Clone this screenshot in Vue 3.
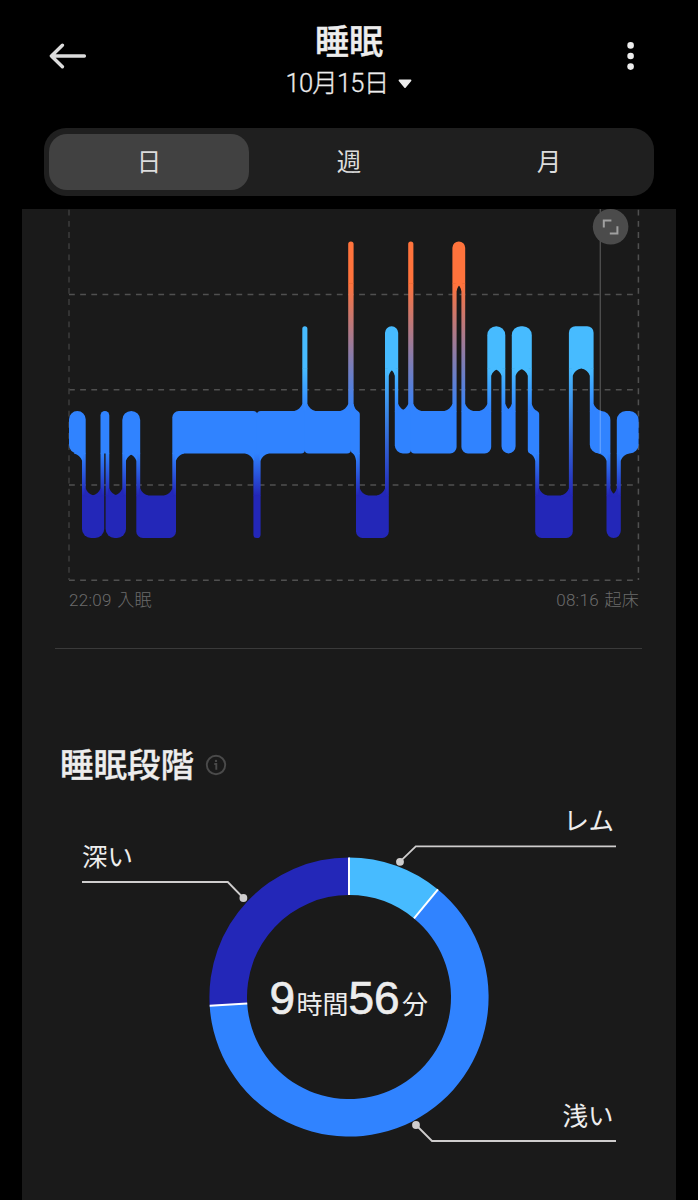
<template>
  <div class="sleep">
    <header class="sleep__header">
      <button type="button" class="icon-btn" aria-label="戻る">
        <svg width="38" height="28" viewBox="0 0 38 28" fill="none">
          <path d="M35.4 14H2.4M13.4 3.2L2.4 14L13.4 24.8" stroke="#dcdcdc" stroke-width="3.4" stroke-linecap="round" stroke-linejoin="round" />
        </svg>
      </button>
      <div class="sleep__heading">
        <h1 class="sleep__title">睡眠</h1>
        <div class="sleep__date">
          <span>10月15日</span>
          <svg width="14" height="10" viewBox="0 0 14 10">
            <path d="M1.4 1.4H12.6L7 8.2Z" fill="#ededed" stroke="#ededed" stroke-width="1.6" stroke-linejoin="round" />
          </svg>
        </div>
      </div>
      <button type="button" class="icon-btn icon-btn--menu" aria-label="メニュー">
        <svg width="8" height="30" viewBox="0 0 8 30" fill="#ededed">
          <circle v-for="cy in [4.4, 15, 25.6]" :key="cy" cx="4.6" :cy="cy" r="3.3" />
        </svg>
      </button>
    </header>

    <nav class="tabs">
      <button
        v-for="tab in tabs"
        :key="tab"
        type="button"
        class="tabs__item"
        :class="{ 'tabs__item--active': tab === activeTab }"
        @click="activeTab = tab"
      >
        {{ tab }}
      </button>
    </nav>

    <main class="card">
      <section class="timeline">
        <svg class="timeline__chart" width="654" height="380" viewBox="22 209 654 380">
          <defs>
            <linearGradient
              v-for="link in links"
              :id="`link-${link.id}`"
              :key="link.id"
              gradientUnits="userSpaceOnUse"
              x1="0"
              x2="0"
              :y1="link.y"
              :y2="link.y + link.h"
            >
              <stop offset="0" :stop-color="link.from" />
              <stop offset="1" :stop-color="link.to" />
            </linearGradient>
          </defs>

          <g class="grid">
            <line v-for="y in [294.4, 389.7, 485, 580.2]" :key="y" x1="69" x2="638" :y1="y" :y2="y" />
            <line class="grid__start" x1="69" x2="69" y1="209.8" y2="580" />
            <line x1="638.4" x2="638.4" y1="209.8" y2="580" />
          </g>

          <rect
            v-for="link in links"
            :key="link.id"
            :x="link.x"
            :y="link.y - 0.5"
            :width="link.w"
            :height="link.h + 1"
            :fill="`url(#link-${link.id})`"
          />
          <g v-for="(block, i) in blocks" :key="i" :fill="block.color">
            <path :d="block.body" />
            <path v-for="(d, n) in block.flares" :key="n" :d="d" />
          </g>

          <line x1="600.3" x2="600.3" y1="209" y2="453" stroke="#fff" stroke-opacity="0.22" stroke-width="1.4" />
          <circle cx="610.6" cy="226.8" r="17.8" fill="#4b4b4b" />
          <path d="M603.8 227.4V220.4H611.4M617.4 226.2V233.4H609.8" fill="none" stroke="#a0a0a0" stroke-width="2" />
        </svg>
        <div class="timeline__range">
          <span>22:09 入眠</span>
          <span>08:16 起床</span>
        </div>
      </section>

      <section class="stages">
        <h2 class="stages__title">
          <span>睡眠段階</span>
          <svg width="22" height="22" viewBox="0 0 22 22" fill="none" stroke="#4a4a4a">
            <circle cx="11" cy="11" r="9.2" stroke-width="1.9" />
            <path d="M9.3 10H11.3V15.8" stroke-width="1.9" />
            <circle cx="11" cy="6.9" r="1.2" fill="#4a4a4a" stroke="none" />
          </svg>
        </h2>
        <svg class="stages__chart" width="654" height="400" viewBox="22 790 654 400">
          <path v-for="slice in slices" :key="slice.name" :d="slice.d" :fill="slice.color" />
          <line
            v-for="slice in slices"
            :key="`sep-${slice.name}`"
            :x1="slice.sep[0]"
            :y1="slice.sep[1]"
            :x2="slice.sep[2]"
            :y2="slice.sep[3]"
            stroke="#fff"
            stroke-width="2"
          />
          <g v-for="slice in slices" :key="`label-${slice.name}`">
            <polyline :points="slice.line" fill="none" stroke="#cfcdcd" stroke-width="1.8" />
            <circle :cx="slice.dot[0]" :cy="slice.dot[1]" r="3.9" fill="#cfcdcd" />
            <text class="stages__label" :x="slice.text[0]" :y="slice.text[1]">{{ slice.name }}</text>
          </g>
          <text class="total" y="1013.5">
            <tspan class="total__num" x="269.5">9</tspan>
            <tspan class="total__unit" x="296.5">時間</tspan>
            <tspan class="total__num" x="348.5">56</tspan>
            <tspan class="total__unit" x="402">分</tspan>
          </text>
        </svg>
      </section>
    </main>
  </div>
</template>

<script setup>
import { ref, computed } from 'vue'

const tabs = ['日', '週', '月']
const activeTab = ref('日')

const BAND = 42.4

const levels = {
  awake: { y: 241.4, color: '#ff733c' },
  rem: { y: 326.2, color: '#47bbff' },
  light: { y: 411, color: '#3083ff' },
  deep: { y: 495.6, color: '#2327b8' },
}

// [stage, start x, end x] -- neighbours overlap by the width of their link
const segments = [
  ['light', 69, 85.7],
  ['deep', 82, 104.2],
  ['light', 100.5, 109.3],
  ['deep', 105.6, 126],
  ['light', 122.3, 140.2],
  ['deep', 136.3, 176],
  ['light', 172.3, 257.2],
  ['deep', 253.4, 260.6],
  ['light', 256.8, 305],
  ['rem', 302.3, 307.4],
  ['light', 304.6, 351],
  ['awake', 348.2, 353.6],
  ['light', 350.8, 359.8],
  ['deep', 356, 388.8],
  ['rem', 385, 398.2],
  ['light', 394.8, 411],
  ['awake', 408.2, 413.4],
  ['light', 410.6, 456.6],
  ['awake', 452.4, 465.2],
  ['light', 461.4, 491.2],
  ['rem', 487.3, 505.3],
  ['light', 501.5, 515.6],
  ['rem', 511.8, 531.8],
  ['light', 527.8, 539.2],
  ['deep', 535.2, 572.8],
  ['rem', 568.9, 593.6],
  ['light', 589.8, 610.4],
  ['deep', 606.5, 620.8],
  ['light', 616.8, 638.6],
]

const links = computed(() =>
  segments.slice(1).map(([stage, x0], i) => {
    const [prevStage, , prevEnd] = segments[i]
    const [top, bottom] = [levels[prevStage], levels[stage]].sort((a, b) => a.y - b.y)
    return {
      id: i,
      x: x0,
      w: prevEnd - x0,
      y: top.y + BAND,
      h: bottom.y - top.y - BAND,
      from: top.color,
      to: bottom.color,
    }
  })
)

// Flare where a link runs into the edge of a block.
// dx: direction along the edge, dy: direction away from the block.
function flare(x, y, dx, dy, size) {
  const s = Math.min(8, size)
  return `M${x - dx} ${y - dy}V${y + dy * 7}H${x}Q${x + dx * s * 0.27} ${y + dy * 1.6} ${x + dx * s} ${y}V${y - dy}Z`
}

function corner(r, dx, dy) {
  return r ? `a${r} ${r} 0 0 1 ${dx * r} ${dy * r}` : ''
}

function isSpike(seg) {
  return Boolean(seg) && seg[2] - seg[1] < 8
}

const blocks = computed(() =>
  segments.map((seg, i) => {
    const [stage, x0, x1] = seg
    const { y, color } = levels[stage]
    const prev = segments[i - 1]
    const next = segments[i + 1]
    const w = x1 - x0
    const bottom = y + BAND
    const side = (other) => (other ? Math.sign(levels[other[0]].y - y) : 0)
    const before = side(prev)
    const after = side(next)

    let base = w < 22.5 ? Math.min(w / 2, 9) : 6.5
    // short steps between two levels are only slightly rounded
    if (before * after === -1 && w < 12) base = 3.5
    const left = isSpike(prev) ? Math.min(base, 4) : base
    const right = isSpike(next) ? Math.min(base, 4) : base
    // corners next to a link stay square
    const tl = before === -1 ? 0 : left
    const tr = after === -1 ? 0 : right
    const br = after === 1 ? 0 : right
    const bl = before === 1 ? 0 : left

    const body = [
      `M${x0 + tl} ${y}H${x1 - tr}`,
      corner(tr, 1, 1),
      `V${bottom - br}`,
      corner(br, -1, 1),
      `H${x0 + bl}`,
      corner(bl, -1, -1),
      `V${y + tl}`,
      corner(tl, 1, -1),
      'Z',
    ].join('')

    const from = prev ? prev[2] : x0
    const to = next ? next[1] : x1
    const flares = []
    // opposite sides share no gap, so each flare may run to the far corner
    const gapLeft = before === after ? to - from : x1 - from - 2
    const gapRight = before === after ? to - from : to - x0 - 2
    if (before && gapLeft > 4) flares.push(flare(from, before === 1 ? bottom : y, 1, before, gapLeft))
    if (after && gapRight > 3) flares.push(flare(to, after === 1 ? bottom : y, -1, after, gapRight))
    return { body, flares, color }
  })
)

const CX = 349
const CY = 997
const R_OUT = 139.6
const R_IN = 102

const stages = [
  { name: 'レム', percent: 11, color: '#47bbff', line: '400,861.6 415.8,846.4 616,846.4', dot: [400, 861.8], text: [563.5, 830] },
  { name: '浅い', percent: 63, color: '#3083ff', line: '416,1125 432,1141 616,1141', dot: [416, 1125], text: [562.5, 1124.5] },
  { name: '深い', percent: 26, color: '#2327b8', line: '82,882 227.8,882 243.4,898', dot: [243.4, 898], text: [82, 865.5] },
]

function polar(percent, r) {
  const a = (percent / 100) * Math.PI * 2
  return [CX + Math.sin(a) * r, CY - Math.cos(a) * r]
}

const slices = computed(() => {
  let start = 0
  return stages.map((stage) => {
    const end = start + stage.percent
    const large = stage.percent > 50 ? 1 : 0
    const outer = polar(start, R_OUT)
    const inner = polar(start, R_IN)
    const d = `M${outer}A${R_OUT} ${R_OUT} 0 ${large} 1 ${polar(end, R_OUT)}L${polar(end, R_IN)}A${R_IN} ${R_IN} 0 ${large} 0 ${inner}Z`
    start = end
    return { ...stage, d, sep: [...outer, ...inner] }
  })
})
</script>

<style>
body {
  margin: 0;
  background: #000;
}
</style>

<style scoped>
.sleep {
  display: flex;
  flex-direction: column;
  width: 698px;
  height: 1200px;
  overflow: hidden;
  background: #000;
  color: #ededed;
  font-family: "Liberation Sans", "Noto Sans CJK JP", sans-serif;
}

.sleep__header {
  display: grid;
  grid-template-columns: 38px 1fr 38px;
  height: 128px;
  padding: 0 49px;
  box-sizing: border-box;
}

.icon-btn {
  display: flex;
  align-items: center;
  height: 112px;
  padding: 0;
  border: 0;
  background: none;
  cursor: pointer;
}

.icon-btn--menu {
  justify-content: center;
}

.sleep__heading {
  display: flex;
  flex-direction: column;
  align-items: center;
  padding-top: 21px;
}

.sleep__title {
  margin: 0;
  font-size: 34px;
  font-weight: 500;
  line-height: 42px;
  -webkit-text-stroke: 0.4px #ededed;
}

.sleep__date {
  display: flex;
  align-items: center;
  gap: 10px;
  font-family: Roboto, "Noto Sans CJK JP", sans-serif;
  font-size: 25.5px;
  font-weight: 300;
  letter-spacing: -0.8px;
  line-height: 40px;
  -webkit-text-stroke: 0.3px #ededed;
}

.sleep__date svg {
  margin-top: 2px;
}

.tabs {
  display: flex;
  flex-shrink: 0;
  width: 610px;
  height: 68px;
  margin: 0 44px;
  padding: 6px 5px;
  box-sizing: border-box;
  border-radius: 22px;
  background: #1f1f1f;
}

.tabs__item {
  flex: 1;
  padding: 0 0 2px;
  border: 0;
  border-radius: 18px;
  background: none;
  color: #dcdcdc;
  font: 24.5px/54px "Noto Sans CJK JP", sans-serif;
  cursor: pointer;
}

.tabs__item--active {
  background: #414141;
}

.card {
  flex: 1;
  margin: 13px 22px 0;
  background: #1a1a1a;
}

.timeline {
  height: 439px;
  margin-bottom: 96px;
}

.timeline::after {
  content: "";
  display: block;
  height: 1px;
  margin: 37px 34px 0 33px;
  background: #3a3a3a;
}

.timeline__chart,
.stages__chart {
  display: block;
}

.grid line {
  stroke: #505050;
  stroke-width: 1.5;
  stroke-dasharray: 5.8 5.36;
}

.grid .grid__start {
  stroke: #3c3c3c;
}

.timeline__range {
  display: flex;
  justify-content: space-between;
  padding: 0 37px 0 47px;
  color: #6c6c6c;
  font-family: Roboto, "Noto Sans CJK JP", sans-serif;
  font-size: 17px;
  font-weight: 300;
  letter-spacing: 0.3px;
  word-spacing: 1px;
  line-height: 22px;
}

.stages__title {
  display: flex;
  align-items: center;
  gap: 11px;
  height: 42px;
  margin: 0 0 4px;
  padding-left: 38px;
  font-size: 33.5px;
  font-weight: 500;
  line-height: 42px;
  -webkit-text-stroke: 0.3px #ededed;
}

.stages__title span {
  padding-top: 2px;
}

.stages__label {
  fill: #ededed;
  font-size: 25.5px;
}

.total {
  fill: #ededed;
}

.total__num {
  font-size: 46px;
  stroke: #ededed;
  stroke-width: 0.7;
}

.total__unit {
  font-size: 26px;
}
</style>
